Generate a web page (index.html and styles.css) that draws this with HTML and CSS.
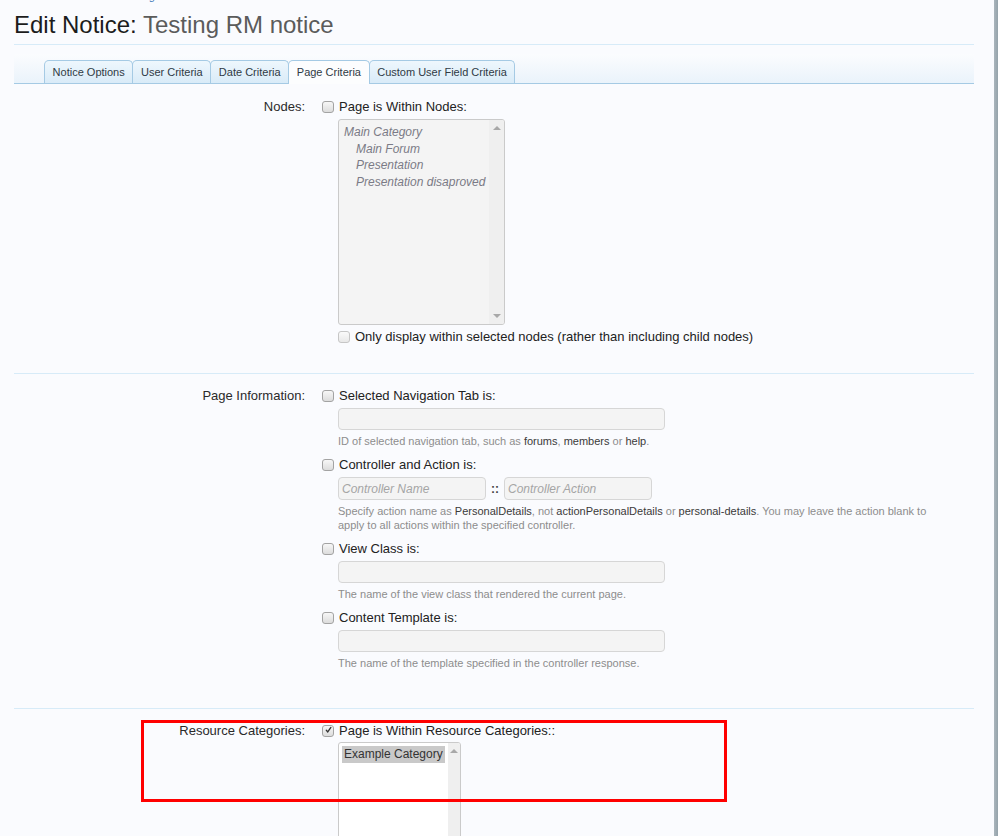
FILE: index.html
```html
<!DOCTYPE html>
<html lang="en">
<head>
<meta charset="utf-8">
<title>Edit Notice: Testing RM notice</title>
<link rel="stylesheet" href="styles.css">
</head>
<body>
<div class="page">
  <div class="main">
    <div class="crumbs">
      <span class="crumb">Home</span>
      <span class="crumb">Notices</span>
      <span class="crumb">Testing RM notice</span>
    </div>
    <h1 class="title"><span class="t-prefix">Edit Notice:</span> <span class="t-name">Testing RM notice</span></h1>

    <div class="tabs">
      <span class="tab">Notice Options</span>
      <span class="tab">User Criteria</span>
      <span class="tab">Date Criteria</span>
      <span class="tab active">Page Criteria</span>
      <span class="tab">Custom User Field Criteria</span>
    </div>

    <div class="row row-nodes">
      <div class="label">Nodes:</div>
      <div class="ctrl">
        <div class="check"><span class="cb"></span><span>Page is Within Nodes:</span></div>
        <div class="listbox lb-nodes disabled">
          <div class="lb-items">
            <div class="opt">Main Category</div>
            <div class="opt child">Main Forum</div>
            <div class="opt child">Presentation</div>
            <div class="opt child">Presentation disaproved</div>
          </div>
          <div class="scroll"><span class="arr up"></span><span class="arr down"></span></div>
        </div>
        <div class="check sub-check"><span class="cb faded"></span><span>Only display within selected nodes (rather than including child nodes)</span></div>
      </div>
    </div>

    <div class="row row-info">
      <div class="label">Page Information:</div>
      <div class="ctrl">
        <div class="check"><span class="cb"></span><span>Selected Navigation Tab is:</span></div>
        <div class="field"><span class="text-input wide"></span></div>
        <p class="hint">ID of selected navigation tab, such as <b>forums</b>, <b>members</b> or <b>help</b>.</p>

        <div class="check gap"><span class="cb"></span><span>Controller and Action is:</span></div>
        <div class="field pair">
          <span class="text-input half">Controller Name</span>
          <span class="sep">::</span>
          <span class="text-input half">Controller Action</span>
        </div>
        <p class="hint">Specify action name as <b>PersonalDetails</b>, not <b>actionPersonalDetails</b> or <b>personal-details</b>. You may leave the action blank to<br>apply to all actions within the specified controller.</p>

        <div class="check gap"><span class="cb"></span><span>View Class is:</span></div>
        <div class="field"><span class="text-input wide"></span></div>
        <p class="hint">The name of the view class that rendered the current page.</p>

        <div class="check gap"><span class="cb"></span><span>Content Template is:</span></div>
        <div class="field"><span class="text-input wide"></span></div>
        <p class="hint">The name of the template specified in the controller response.</p>
      </div>
    </div>

    <div class="row row-res">
      <div class="label">Resource Categories:</div>
      <div class="ctrl">
        <div class="check"><span class="cb checked"><svg viewBox="0 0 12 12" width="12" height="12"><path d="M3 6.2 L5 8.6 L9.2 2.6" fill="none" stroke="#333" stroke-width="1.8" stroke-linecap="round" stroke-linejoin="round"/></svg></span><span>Page is Within Resource Categories::</span></div>
        <div class="listbox lb-res">
          <div class="lb-items">
            <div class="opt selected">Example Category</div>
          </div>
          <div class="scroll"><span class="arr up"></span></div>
        </div>
      </div>
    </div>

    <div class="highlight"></div>
  </div>
  <div class="edge"></div>
</div>
</body>
</html>
```

FILE: styles.css
```css
html, body {
  margin: 0;
  padding: 0;
  overflow: hidden;
  background: #fafbfe;
}

body {
  font-family: "Liberation Sans", Arial, sans-serif;
  color: #222;
}

.page {
  display: flex;
  height: 836px;
  overflow: hidden;
}

.main {
  position: relative;
  flex: 1;
  padding: 0 20px 0 14px;
}

.edge {
  width: 4px;
  background: linear-gradient(to right, #aab5bc, #95a3ab);
}

/* breadcrumb (cut off at the top) */
.crumbs {
  height: 3px;
  overflow: hidden;
  display: flex;
  align-items: flex-end;
  gap: 20px;
  font-size: 11px;
  line-height: 13px;
  color: #3a7ab8;
}

.title {
  margin: 7px 0 0;
  padding-bottom: 4px;
  border-bottom: 1px solid #d7ebf8;
  font-size: 24px;
  line-height: 30px;
  font-weight: normal;
}

.t-prefix { color: #1c1c1c; }
.t-name { color: #5b5b5b; }

/* tabs */
.tabs {
  margin-top: 9px;
  padding: 6px 0 0 30px;
  display: flex;
  align-items: flex-end;
  height: 23px;
  background: linear-gradient(#fbfcfe, #eaf3fb);
  border-bottom: 1px solid #a5cae4;
}

.tab {
  height: 23px;
  box-sizing: border-box;
  padding: 0 7.6px;
  margin-right: -1px;
  display: flex;
  align-items: center;
  font-size: 11px;
  color: #2f3a45;
  border: 1px solid #a5cae4;
  border-bottom: none;
  border-radius: 5px 5px 0 0;
  background: linear-gradient(#eef7fd, #d9ebf8);
}

.tab.active {
  background: #fcfdfe;
  height: 24px;
  margin-bottom: -1px;
  padding-bottom: 1px;
}

/* form rows */
.row {
  display: grid;
  grid-template-columns: 291px 1fr;
  column-gap: 17px;
  font-size: 13px;
  line-height: 16px;
}

.row + .row {
  border-top: 1px solid #d7ebf8;
}

.row-nodes { padding: 15px 0 28px; }
.row-info { padding: 14px 0 38px; }
.row-res { padding: 14px 0 0; }

.label {
  text-align: right;
  color: #2a2a2a;
}

.ctrl {
  display: flex;
  flex-direction: column;
  align-items: flex-start;
}

.check {
  display: flex;
  align-items: center;
  gap: 5px;
  color: #222;
}

.check.gap { margin-top: 9px; }

.cb {
  width: 12px;
  height: 12px;
  box-sizing: border-box;
  border: 1px solid #a3a3a3;
  border-radius: 3px;
  background: linear-gradient(#f7f7f7, #dcdcdc);
  flex: none;
  display: flex;
  align-items: center;
  justify-content: center;
  margin-top: -1px;
}

.cb.faded {
  border-color: #c6c6c6;
  background: linear-gradient(#fafafa, #e8e8e8);
}

.cb svg { display: block; margin-top: -2px; margin-left: 1px; }

.sub-check { margin: 4px 0 0 16px; }

/* list boxes */
.listbox {
  display: flex;
  margin: 4px 0 0 16px;
  height: 206px;
  box-sizing: border-box;
  border: 1px solid #cacaca;
  border-radius: 3px;
  background: #fff;
  overflow: hidden;
}

.listbox.disabled { background: #f4f4f4; }

.lb-nodes { width: 167px; }
.lb-res { width: 123px; margin-top: 3px; }

.lb-items {
  flex: 1;
  padding: 4px 3px 0 5px;
  font-size: 12px;
  line-height: 16.7px;
}

.lb-res .lb-items { padding: 3px 3px 0 3px; }

.opt {
  color: #7b7b86;
  font-style: italic;
  white-space: nowrap;
}

.opt.child { padding-left: 12px; }

.opt.selected {
  font-style: normal;
  color: #333;
  background: #c9c9c9;
  padding: 0 2px;
  line-height: 17px;
}

.scroll {
  width: 15px;
  background: #efefef;
  display: flex;
  flex-direction: column;
  justify-content: space-between;
  align-items: center;
  padding: 6px 0;
  box-sizing: border-box;
}

.arr {
  width: 0;
  height: 0;
  border-left: 4px solid transparent;
  border-right: 4px solid transparent;
}

.arr.up { border-bottom: 4px solid #a8a8a8; }
.arr.down { border-top: 4px solid #a8a8a8; }

/* text inputs */
.field {
  margin: 4px 0 0 16px;
  display: flex;
  align-items: center;
}

.text-input {
  display: flex;
  align-items: center;
  height: 22px;
  box-sizing: border-box;
  border: 1px solid #d6d6d6;
  border-radius: 4px;
  background: #f4f4f4;
  padding: 0 3px;
  font-size: 12px;
  font-style: italic;
  color: #a5a5a5;
}

.text-input.wide { width: 327px; }
.text-input.half { width: 148px; height: 23px; }

.sep {
  width: 18px;
  text-align: center;
  font-size: 12px;
  font-weight: bold;
  color: #444;
}

.hint {
  margin: 4px 0 0 16px;
  font-size: 11px;
  line-height: 14px;
  color: #8d8d8d;
}

.hint b {
  font-weight: normal;
  color: #3a3a3a;
}

/* red annotation box */
.highlight {
  position: absolute;
  left: 141px;
  top: 720px;
  width: 586px;
  height: 82px;
  box-sizing: border-box;
  border: 3px solid #ff0000;
}
```
